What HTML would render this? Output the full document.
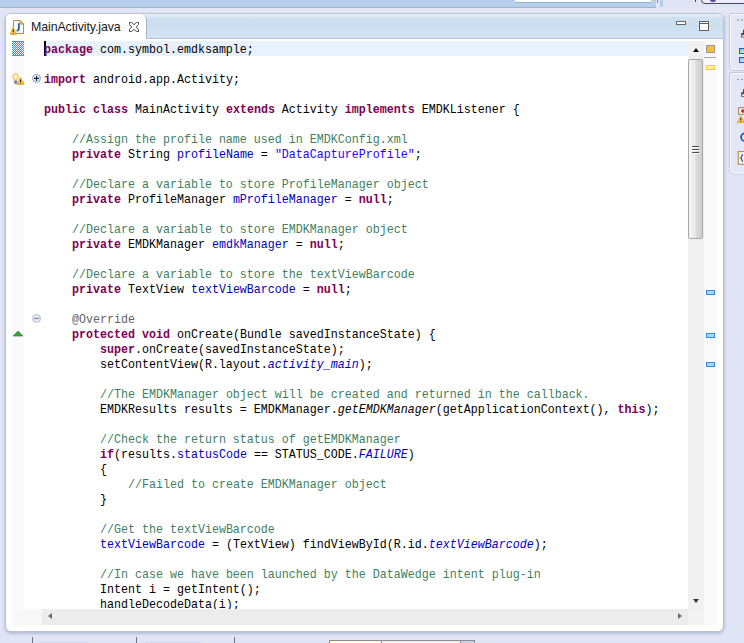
<!DOCTYPE html>
<html>
<head>
<meta charset="utf-8">
<title>MainActivity.java</title>
<style>
html,body{margin:0;padding:0;}
body{width:744px;height:643px;overflow:hidden;position:relative;background:#e0e5f6;font-family:"Liberation Sans",sans-serif;}
.abs{position:absolute;}
/* top toolbar remnants */
#topband{left:0;top:0;width:656px;height:7px;background:linear-gradient(#b2cee9,#b8d0ea 50%,#b1cfea);border-bottom:1px solid #a9b3c9;}
#topbox{left:515px;top:0;width:136px;height:2px;background:#fff;border-bottom:1px solid #8fb0d4;}
#topstrip{left:660px;top:0;width:3px;height:7px;background:#b4cde8;}
#tophandle{left:657px;top:0;width:1px;height:3px;background:#a08868;}
#toptick{left:695px;top:0;width:1px;height:2px;background:#444;}
#persp{left:701px;top:-8px;width:60px;height:10px;border:1px solid #4a4660;border-radius:4px;background:#e9ecfa;}
#perspdot{left:710px;top:-3px;width:6px;height:5px;border-radius:3px;background:#5a4aa8;}
#topgap{left:0;top:8px;width:744px;height:5px;background:#e3e6f6;}
/* shadow strips */
#shl{left:0;top:16px;width:5px;height:612px;background:linear-gradient(90deg,#e3e7f4,#e1e5f5 40%,#dfe4f6 80%,#d2d6e8);}
#shr{left:724px;top:16px;width:3px;height:612px;background:linear-gradient(90deg,#d3d7e8,#e0e5f6);}
/* main panel */
#panel{left:5px;top:13px;width:719px;height:619px;background:#fff;border:1px solid #bcc0d0;border-radius:6px;box-sizing:border-box;overflow:hidden;box-shadow:0 2px 3px rgba(140,150,185,.5);}
#hdr{left:0;top:0;width:717px;height:24px;background:linear-gradient(#ecf2fb 0,#dde9f5 2px,#d0e0f0 4px,#ccddee 50%,#d3e3f2 100%);border-bottom:1px solid #b5c3d8;}
#tab{left:0;top:0;width:140px;height:25px;background:#fff;border-right:1px solid #aab4c8;border-top-right-radius:6px;}
#tabtxt{left:25px;top:6px;font-size:12.4px;color:#1b1b1b;white-space:nowrap;letter-spacing:-0.1px;}
#code{left:38px;top:27px;width:644px;height:568px;overflow:hidden;}
#hl{left:38px;top:27px;width:644px;height:15px;background:#e8f2fe;}
#caret{left:38px;top:27px;width:2px;height:15px;background:#000;}
.l{height:15px;line-height:15px;font-family:"Liberation Mono",monospace;font-size:11.67px;color:#000;white-space:pre;transform:scaleY(1.08);transform-origin:0 11.5px;position:relative;top:1.5px;}
.k{color:#7f0055;font-weight:bold;}
.c{color:#3f7f5f;}
.s{color:#2a00ff;}
.f{color:#0000c0;}
.fi{color:#0000c0;font-style:italic;}
.i{font-style:italic;}
.a{color:#646464;}
#annocol{left:6px;top:42px;width:12px;height:570px;background:#fafafa;}
#rulerbot{left:6px;top:595px;width:30px;height:16px;background:#f8f8f8;}
#range{left:6px;top:27px;width:12px;height:15px;background-color:#fff;
 background-image:linear-gradient(45deg,#2f8ffb 25%,transparent 25%,transparent 75%,#2f8ffb 75%),linear-gradient(45deg,#2f8ffb 25%,transparent 25%,transparent 75%,#2f8ffb 75%);
 background-size:2px 2px;background-position:0 0,1px 1px;border-top:1px solid #3a95fb;border-bottom:1px solid #3a95fb;box-sizing:border-box;}
#vsb{left:682px;top:27px;width:16px;height:568px;background:#f0f0f0;}
#thumb{left:682px;top:45px;width:15px;height:180px;box-sizing:border-box;border:1px solid #a6a6a6;border-radius:2px;background:linear-gradient(90deg,#f5f5f5,#e9e9e9 45%,#d9d9d9 60%,#cfcfcf);}
.grip{left:686px;width:7px;height:1px;background:#4a4a4a;box-shadow:0 1px 0 #fff;}
#ovr{left:698px;top:27px;width:13px;height:584px;background:#f9f9f9;}
#hsb{left:36px;top:595px;width:646px;height:16px;background:#ececec;}
#corner{left:682px;top:595px;width:16px;height:16px;background:#f2f2f2;}
.tri{width:0;height:0;border:4px solid transparent;}
#up{left:686.5px;top:30px;border-width:4px 3.5px;border-bottom:4px solid #111;}
#down{left:687px;top:585px;border-top:4px solid #333;border-width:3px;border-top-width:4px;}
#lft{left:38px;top:599px;border-width:3.5px 4px;border-right:4px solid #6e6e6e;}
#rgt{left:672px;top:599px;border-width:3.5px 4px;border-left:4px solid #6e6e6e;}
#ysq{left:700px;top:31px;width:9px;height:8px;box-sizing:border-box;background:#f6c128;border:1px solid #9a96a8;}
#yline{left:698px;top:43px;width:12px;height:1px;background:#a8a8a8;}
#yrect{left:700px;top:51px;width:9px;height:5px;box-sizing:border-box;background:#fcefb8;border:1px solid #f5c845;}
.bm{left:700px;width:9px;height:5px;box-sizing:border-box;background:#b4d4f6;border:1px solid #2b8cf6;}
/* min / max */
#minb{left:670px;top:7px;width:10px;height:4px;box-sizing:border-box;border:1px solid #666;background:#fff;}
#maxb{left:693px;top:7px;width:10px;height:10px;box-sizing:border-box;border:1px solid #5e5e5e;background:linear-gradient(#fff 1px,#5e5e5e 1px,#5e5e5e 2px,#fff 2px);}
/* right side stacks */
.rp{left:729px;width:30px;box-sizing:border-box;border:1px solid #fbfbff;border-radius:6px;background:#e4e8f8;box-shadow:-1px 0 0 #c9cfe6, 0 1px 0 #c9cfe6;}
/* bottom tabs */
.vl{top:637px;width:1px;height:6px;background:#6f7488;}
.bt{top:640px;height:5px;box-sizing:border-box;border:1px solid #8c8c92;}
</style>
</head>
<body>
<div class="abs" id="topband"></div>
<div class="abs" id="topbox"></div>
<div class="abs" id="tophandle"></div>
<div class="abs" id="topstrip"></div>
<div class="abs" id="toptick"></div>
<div class="abs" id="persp"></div>
<div class="abs" id="perspdot"></div>
<div class="abs" id="topgap"></div>
<div class="abs" id="shl"></div>
<div class="abs" id="shr"></div>

<div class="abs" id="panel">
  <div class="abs" id="hdr"></div>
  <div class="abs" id="tab"></div>
  <svg class="abs" style="left:4px;top:6px" width="15" height="16" viewBox="0 0 15 16">
    <path d="M3.500 .500h6.500l3.500 3.500v9.500h-10z" fill="#fcfcff" stroke="#b78d38" stroke-width="1"/>
    <path d="M10 .500v3.500h3.500z" fill="#f3d9a4" stroke="#b78d38" stroke-width="1" stroke-linejoin="round"/>
    <path d="M8.900 3.200v4.900c0 1.700-.700 2.600-2.300 2.800" fill="none" stroke="#2f69a6" stroke-width="1.900"/>
    <path d="M3.200 7.200l3.100 7.300H.2z" fill="#fbd46c" stroke="#e3a11e" stroke-width=".9" stroke-linejoin="round"/>
    <rect x="2.700" y="9.300" width="1.100" height="2.700" fill="#3b2a12"/>
    <rect x="2.700" y="12.600" width="1.100" height="1.100" fill="#3b2a12"/>
  </svg>
  <div class="abs" id="tabtxt">MainActivity.java</div>
  <svg class="abs" style="left:123px;top:8px" width="10" height="10" viewBox="0 0 10 10">
    <path d="M.500 .500H2.600L5 2.700 7.400 .500H9.500V2.600L7.300 5 9.500 7.400V9.500H7.400L5 7.300 2.600 9.500H.500V7.400L2.700 5 .500 2.600z" fill="#fff" stroke="#4c4c4c" stroke-width="1"/>
  </svg>
  <div class="abs" id="minb"></div>
  <div class="abs" id="maxb"></div>

  <div class="abs" id="annocol"></div>
  <div class="abs" id="rulerbot"></div>
  <div class="abs" style="left:35px;top:27px;width:1px;height:568px;background:#fbfbfb"></div>
  <div class="abs" id="range"></div>
  <div class="abs" id="hl"></div>
  <div class="abs" id="caret"></div>
  <div class="abs" id="code">
<div class="l"><span class="k">package</span> com.symbol.emdksample;</div>
<div class="l"></div>
<div class="l"><span class="k">import</span> android.app.Activity;</div>
<div class="l"></div>
<div class="l"><span class="k">public</span> <span class="k">class</span> MainActivity <span class="k">extends</span> Activity <span class="k">implements</span> EMDKListener {</div>
<div class="l"></div>
<div class="l">    <span class="c">//Assign the profile name used in EMDKConfig.xml</span></div>
<div class="l">    <span class="k">private</span> String <span class="f">profileName</span> = <span class="s">"DataCaptureProfile"</span>;</div>
<div class="l"></div>
<div class="l">    <span class="c">//Declare a variable to store ProfileManager object</span></div>
<div class="l">    <span class="k">private</span> ProfileManager <span class="f">mProfileManager</span> = <span class="k">null</span>;</div>
<div class="l"></div>
<div class="l">    <span class="c">//Declare a variable to store EMDKManager object</span></div>
<div class="l">    <span class="k">private</span> EMDKManager <span class="f">emdkManager</span> = <span class="k">null</span>;</div>
<div class="l"></div>
<div class="l">    <span class="c">//Declare a variable to store the textViewBarcode</span></div>
<div class="l">    <span class="k">private</span> TextView <span class="f">textViewBarcode</span> = <span class="k">null</span>;</div>
<div class="l"></div>
<div class="l">    <span class="a">@Override</span></div>
<div class="l">    <span class="k">protected</span> <span class="k">void</span> onCreate(Bundle savedInstanceState) {</div>
<div class="l">        <span class="k">super</span>.onCreate(savedInstanceState);</div>
<div class="l">        setContentView(R.layout.<span class="fi">activity_main</span>);</div>
<div class="l"></div>
<div class="l">        <span class="c">//The EMDKManager object will be created and returned in the callback.</span></div>
<div class="l">        EMDKResults results = EMDKManager.<span class="i">getEMDKManager</span>(getApplicationContext(), <span class="k">this</span>);</div>
<div class="l"></div>
<div class="l">        <span class="c">//Check the return status of getEMDKManager</span></div>
<div class="l">        <span class="k">if</span>(results.<span class="f">statusCode</span> == STATUS_CODE.<span class="fi">FAILURE</span>)</div>
<div class="l">        {</div>
<div class="l">            <span class="c">//Failed to create EMDKManager object</span></div>
<div class="l">        }</div>
<div class="l"></div>
<div class="l">        <span class="c">//Get the textViewBarcode</span></div>
<div class="l">        <span class="f">textViewBarcode</span> = (TextView) findViewById(R.id.<span class="fi">textViewBarcode</span>);</div>
<div class="l"></div>
<div class="l">        <span class="c">//In case we have been launched by the DataWedge intent plug-in</span></div>
<div class="l">        Intent i = getIntent();</div>
<div class="l">        handleDecodeData(i);</div>
</div>

  <!-- ruler icons -->
  <svg class="abs" style="left:5.500px;top:58.600px" width="13" height="12.200" viewBox="0 0 15 14">
    <path d="M4.2 .8c-2 0-3.3 1.5-3.3 3.1 0 1.500 1 2.200 1.500 3.200l.3 1.200h2.800l.3-1.200c.5-1 1.600-1.700 1.600-3.200C7.400 2.300 6.200 .8 4.200 .8z" fill="#fdf0b8" stroke="#e8a826" stroke-width="1"/>
    <path d="M2.800 9.200h2.800v2.200l-.8 .9h-1.200l-.8-.9z" fill="#7b93c8" stroke="#4a5f98" stroke-width=".6"/>
    <path d="M9.800 5.200l4.300 7.800H5.500z" fill="#f9c64a" stroke="#d89418" stroke-width=".9"/>
    <rect x="9.300" y="7.600" width="1.100" height="3" fill="#3a2a10"/>
    <rect x="9.300" y="11.100" width="1.100" height="1" fill="#3a2a10"/>
  </svg>
  <svg class="abs" style="left:25px;top:59px" width="11" height="11" viewBox="0 0 11 11">
    <circle cx="5.500" cy="5.400" r="4" fill="#dce7f5" stroke="#97a3b8" stroke-width="1"/>
    <path d="M3 5.400h5M5.500 2.900v5" stroke="#16233a" stroke-width="1.100"/>
  </svg>
  <svg class="abs" style="left:25px;top:299px" width="11" height="11" viewBox="0 0 11 11">
    <circle cx="5.500" cy="5.400" r="4" fill="#e3ebf6" stroke="#b4bfd2" stroke-width="1"/>
    <path d="M3 5.400h5" stroke="#7d8594" stroke-width="1.100"/>
  </svg>
  <svg class="abs" style="left:6px;top:316px" width="12" height="8" viewBox="0 0 12 8">
    <path d="M6 1.100L10.800 6H1.200z" fill="#3aa53a" stroke="#1e8a24" stroke-width=".7" stroke-linejoin="round"/>
  </svg>

  <div class="abs" id="vsb"></div>
  <div class="abs" id="thumb"></div>
  <div class="abs grip" style="top:132px"></div>
  <div class="abs grip" style="top:135px"></div>
  <div class="abs grip" style="top:138px"></div>
  <div class="abs tri" id="up"></div>
  <div class="abs tri" id="down"></div>
  <div class="abs" id="ovr"></div>
  <div class="abs" id="ysq"></div>
  <div class="abs" id="yline"></div>
  <div class="abs" id="yrect"></div>
  <div class="abs bm" style="top:276px"></div>
  <div class="abs bm" style="top:319px"></div>
  <div class="abs bm" style="top:348px"></div>
  <div class="abs" id="hsb"></div>
  <div class="abs tri" id="lft"></div>
  <div class="abs tri" id="rgt"></div>
  <div class="abs" id="corner"></div>
</div>

<!-- right trim stacks -->
<svg class="abs" style="left:726px;top:10px" width="18" height="170" viewBox="726 10 18 170">
  <defs><linearGradient id="bg1" x1="0" y1="0" x2="0" y2="1"><stop offset="0" stop-color="#7fbdf0"/><stop offset="1" stop-color="#d4ebfc"/></linearGradient></defs>
  <path d="M745 13.500H731Q729.500 13.500 729.500 15V66Q729.500 70.500 734 70.500H745z" fill="#e4e7f7" stroke="#c0c6dd"/>
  <path d="M745 14.500H731.500Q730.500 14.500 730.500 15.500V66Q730.500 69.500 734 69.500H745" fill="none" stroke="#f9faff"/>
  <path d="M745 72.500H731Q729.500 72.500 729.500 74V169.500Q729.500 174 734 174H745z" fill="#e4e7f7" stroke="#c0c6dd"/>
  <path d="M745 73.500H731.500Q730.500 73.500 730.500 74.500V169.500Q730.500 173 734 173H745" fill="none" stroke="#f9faff"/>
  <!-- stack 1 -->
  <rect x="737" y="19.400" width="1.700" height="1.300" fill="#a39680"/><rect x="741" y="19.400" width="1.700" height="1.300" fill="#a39680"/>
  <path d="M743 29.800v3.200h-1.800v4.500h4v-7.700z" fill="#4a4643"/><rect x="742.200" y="35" width="3" height="1.700" fill="#f4f4f4"/>
  <rect x="739.500" y="48.500" width="6" height="5" fill="url(#bg1)" stroke="#1560b8"/>
  <rect x="739.500" y="57.500" width="6" height="5" fill="url(#bg1)" stroke="#1560b8"/>
  <!-- stack 2 -->
  <rect x="737" y="78.800" width="1.700" height="1.300" fill="#a39680"/><rect x="741" y="78.800" width="1.700" height="1.300" fill="#a39680"/>
  <path d="M743 89.300v2.900h-1.800v4.600h4v-7.500z" fill="#4a4643"/><rect x="742.200" y="94.200" width="3" height="1.800" fill="#f4f4f4"/>
  <rect x="738.700" y="107.700" width="7" height="6.600" fill="#fff" stroke="#8c7c52"/>
  <rect x="741" y="109.300" width="4" height="3.500" rx="1.500" fill="#e2283a"/>
  <path d="M740.800 116l3.700 6.500h-7.200z" fill="#fbd46c" stroke="#e3a11e" stroke-width=".9" stroke-linejoin="round"/>
  <rect x="740.300" y="118" width="1.100" height="2.300" fill="#3b2a12"/><rect x="740.300" y="120.800" width="1.100" height="1" fill="#3b2a12"/>
  <circle cx="745" cy="137.200" r="3.900" fill="#dfeafa" stroke="#1a55b0" stroke-width="1.700"/>
  <rect x="738.200" y="151.600" width="7" height="12.600" fill="#fff9e8" stroke="#a8863a"/>
  <path d="M743 154.500c-1.500 0-.8 3-2.300 3.500 1.500 .5 .8 3.500 2.300 3.500" fill="none" stroke="#1a55b0" stroke-width="1.300"/>
</svg>

<!-- bottom tab remnants -->
<div class="abs vl" style="left:32px"></div>
<div class="abs vl" style="left:136px"></div>
<div class="abs vl" style="left:234px"></div>
<div class="abs" style="left:40px;top:642px;width:48px;height:1px;background:#d6daee"></div>
<div class="abs" style="left:145px;top:642px;width:56px;height:1px;background:#d6daee"></div>
<div class="abs bt" style="left:329px;width:53px;background:#fdfbe0"></div>
<div class="abs bt" style="left:381px;width:80px;background:#f1f1f3"></div>
<div class="abs bt" style="left:460px;width:15px;background:#c9d2e4"></div>
</body>
</html>
